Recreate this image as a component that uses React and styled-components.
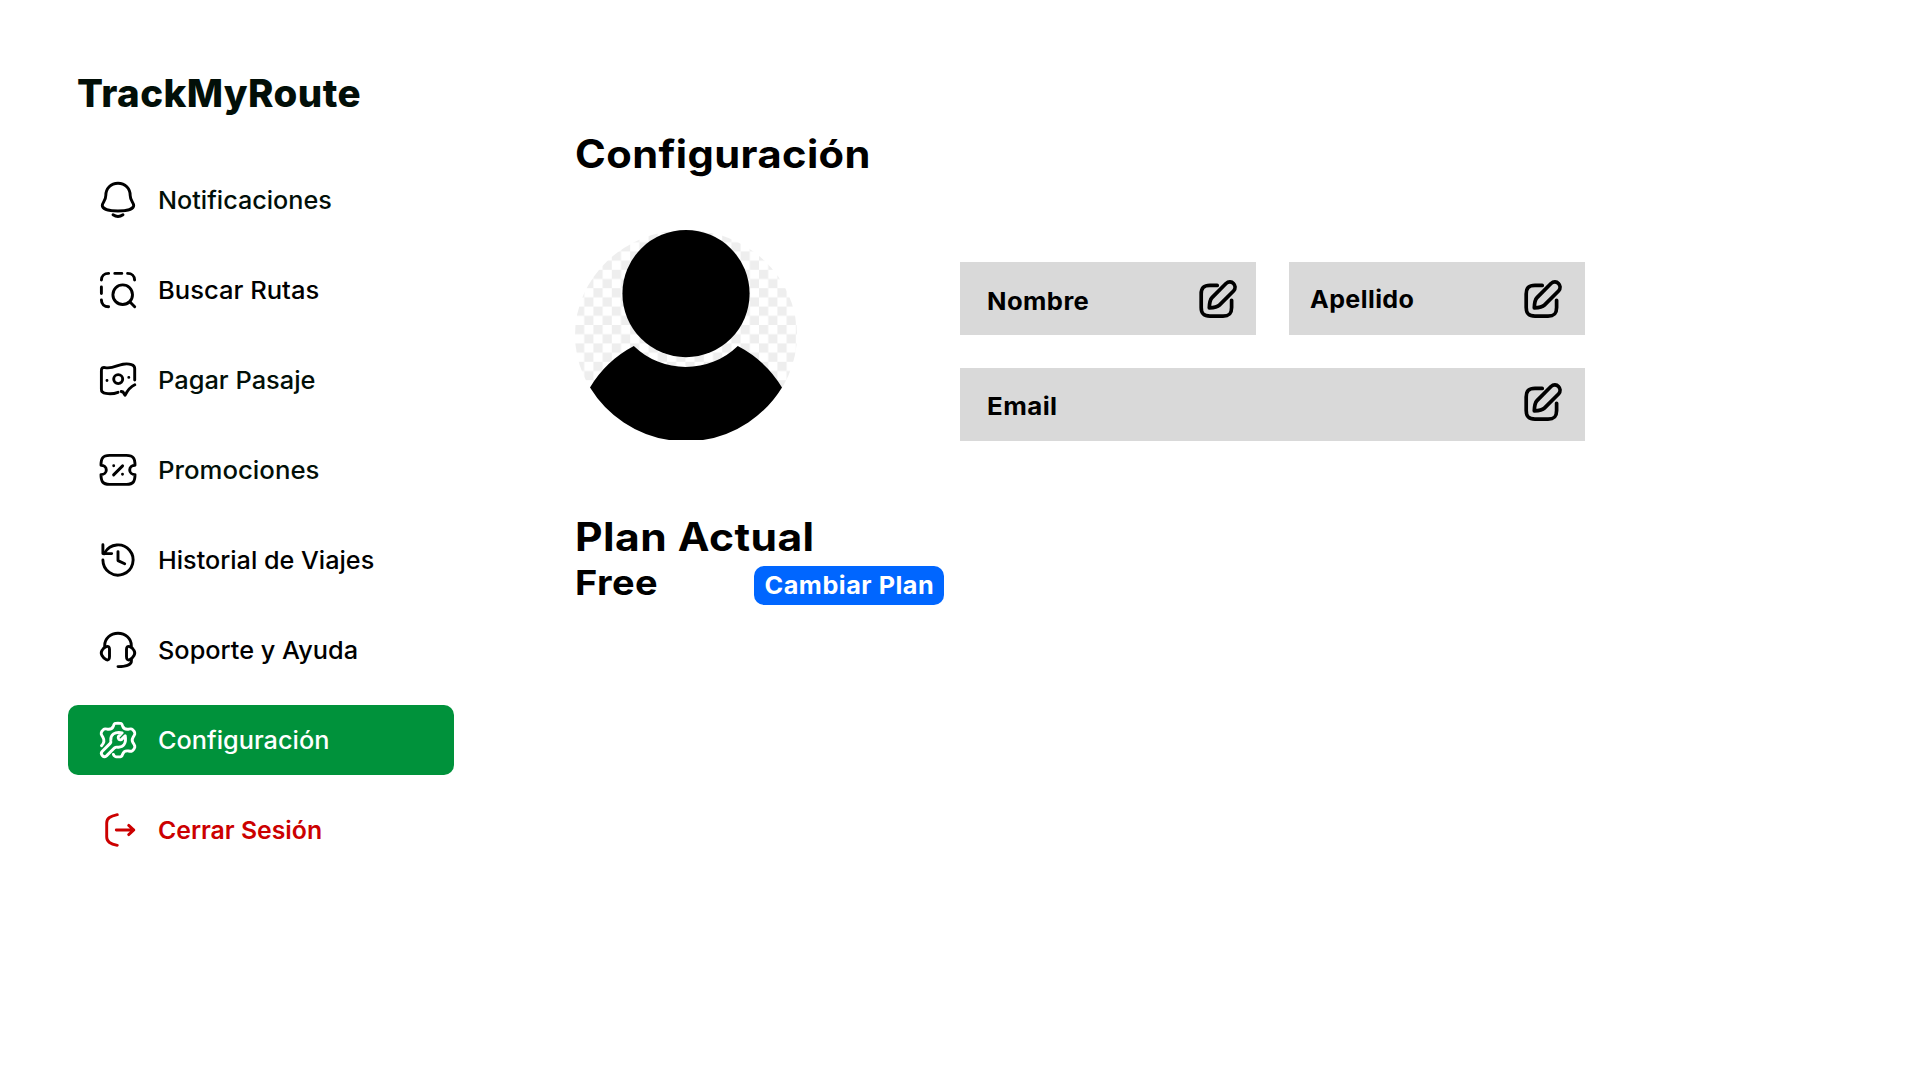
import React from "react";
import styled, { createGlobalStyle } from "styled-components";

const GlobalStyle = createGlobalStyle`
  * { box-sizing: border-box; }
  body {
    margin: 0;
    background: #fff;
    color: #000;
    font-family: Inter, "Liberation Sans", sans-serif;
  }
  h1, h2, p { margin: 0; }
`;

const Page = styled.div`
  display: flex;
  width: 1920px;
  height: 1080px;
  overflow: hidden;
`;

const Sidebar = styled.aside`
  width: 454px;
  padding: 69px 0 0 68px;
`;

const Logo = styled.div`
  height: 96px;
  padding-left: 9px;
  font-size: 38.5px;
  line-height: 48px;
  font-weight: 800;
  letter-spacing: 0.4px;
  color: #020f08;
  white-space: nowrap;
`;

const Nav = styled.nav`
  display: flex;
  flex-direction: column;
  gap: 20px;
`;

const NavItem = styled.a`
  display: flex;
  align-items: center;
  gap: 20px;
  height: 70px;
  padding-left: 30px;
  border-radius: 10px;
  background: ${(p) => (p.$active ? "#00923b" : "transparent")};
  color: ${(p) => p.$color || "#020f08"};
  text-decoration: none;
`;

const NavLabel = styled.span`
  margin-top: 2px;
  font-size: 24.2px;
  line-height: 30px;
  font-weight: ${(p) => p.$weight || 450};
  white-space: nowrap;
  transform: scaleX(${(p) => p.$stretch});
  transform-origin: left;
`;

const Icon = styled.svg`
  flex: none;
  width: 40px;
  height: 40px;
  overflow: visible;
  fill: none;
  stroke: ${(p) => p.$stroke || "#000"};
  stroke-width: ${(p) => p.$width || 2.9};
  stroke-linecap: round;
  stroke-linejoin: round;
`;

const Main = styled.main`
  width: 1009px;
  margin-left: 122px;
  padding-top: 130px;
`;

const Title = styled.h1`
  margin-left: -1px;
  font-size: 39px;
  line-height: 48px;
  font-weight: 700;
  letter-spacing: 0.4px;
  white-space: nowrap;
  transform: scaleX(${(p) => p.$stretch});
  transform-origin: left;
`;

const Profile = styled.section`
  display: flex;
  gap: 163px;
  margin-top: 52px;
`;

const Avatar = styled.svg`
  flex: none;
  width: 222px;
  height: 210px;
  margin-left: -1px;
`;

const Fields = styled.div`
  display: grid;
  grid-template-columns: 296px 296px;
  grid-auto-rows: 73px;
  gap: 33px;
  margin-top: 32px;
`;

const Field = styled.div`
  display: flex;
  justify-content: space-between;
  align-items: flex-start;
  grid-column: ${(p) => (p.$wide ? "1 / -1" : "auto")};
  padding: ${(p) => p.$pad};
  background: #d9d9d9;
`;

const FieldLabel = styled.span`
  margin-top: ${(p) => p.$top}px;
  font-size: 24.2px;
  line-height: 30px;
  font-weight: 700;
  letter-spacing: 0.4px;
  transform: scaleX(${(p) => p.$stretch});
  transform-origin: left;
`;

const Plan = styled.section`
  margin-top: 72px;
`;

const PlanRow = styled.div`
  display: flex;
  justify-content: space-between;
  width: 368px;
  height: 44px;
`;

const PlanName = styled.p`
  margin: 1px 0 0 -1px;
  font-size: 34.5px;
  line-height: 42px;
  font-weight: 700;
  letter-spacing: 0.4px;
  transform: scaleX(1.1);
  transform-origin: left;
`;

const PlanButton = styled.button`
  width: 190px;
  height: 39px;
  margin-top: 5px;
  padding: 0;
  border: 0;
  border-radius: 10px;
  background: #0066ff;
  color: #fff;
  font-family: inherit;
  font-size: 24.2px;
  line-height: 39px;
  font-weight: 700;
  letter-spacing: 0.5px;
  white-space: nowrap;
`;

const PlanButtonLabel = styled.span`
  display: inline-block;
  transform: scaleX(1.043);
`;

const BellIcon = () => (
  <Icon viewBox="0 0 40 40">
    <path d="M20 3.3C12.8 3.3 7.8 8.6 7.8 15.5C7.8 20.5 4.3 22.3 4.3 25.6C4.3 29 11 31 20 31S35.7 29 35.7 25.6C35.7 22.3 32.2 20.5 32.2 15.5C32.2 8.6 27.2 3.3 20 3.3Z" />
    <path d="M15 34.8Q20 38.2 25 34.8" />
  </Icon>
);

const SearchIcon = () => (
  <Icon viewBox="0 0 40 40">
    <path d="M10.6 3.4C6.2 3.4 3.4 6 3.4 10M16.8 3.4H23.8M29.6 3.4C33.8 3.4 36.6 6 36.6 10M3.4 17V23.6M3.4 30C3.4 34 6.2 36.7 10.6 36.7" />
    <circle cx="24.7" cy="24.7" r="9.8" />
    <path d="M32 32L36.7 36.7" />
  </Icon>
);

const MoneyIcon = () => (
  <Icon viewBox="0 0 40 40">
    <path d="M20 32.3C16 33.8 12 34 8 33.4C5 33 3.4 32.3 3.4 29.5V10.5C3.4 8 4.5 7.3 7 7.6C14 9.2 19 5.2 25 4.2C28 3.7 31 3.8 33.5 4.6C36 5.3 36.7 6.4 36.7 8.6V20" />
    <circle cx="20.2" cy="19.1" r="4.5" />
    <path d="M9 20.5V20.5M30.8 17.4V17.4" />
    <path d="M23.2 31.5L25 32L27 35.3C29.5 30.5 33 26.5 36.8 24.8" />
  </Icon>
);

const TicketIcon = () => (
  <Icon viewBox="0 0 40 40">
    <path d="M3 15.3C3 8.5 4.5 5.4 11.5 5.4H28.5C35.5 5.4 37 8.5 37 15.3C33.9 15.3 31.7 17.3 31.7 19.9S33.9 24.6 37 24.6C37 31.3 35.5 34.4 28.5 34.4H11.5C4.5 34.4 3 31.3 3 24.6C6.1 24.6 8.3 22.5 8.3 19.9S6.1 15.3 3 15.3Z" />
    <path d="M15.6 24.9L24.6 15.9M15.7 15.7V15.7M24.5 24.3V24.3" />
  </Icon>
);

const HistoryIcon = () => (
  <Icon viewBox="0 0 40 40">
    <path d="M4.9 20A15.1 15.1 0 1 0 6.9 12.5L6 13.8" />
    <path d="M4.9 4.8V13.6H13.7" />
    <path d="M20 11.6V20.6L26.7 23.7" />
  </Icon>
);

const HeadsetIcon = () => (
  <Icon viewBox="0 0 40 40">
    <path d="M6.7 16.5V15.5C6.7 8.5 12.5 3.3 20 3.3S33.3 8.5 33.3 15.5V16.5" />
    <path d="M4 20.5C5 18.3 6.4 17.3 8.3 16.6C10.5 16 11.5 17 11.5 19.2V26.8C11.5 29.5 10.3 30.4 8.3 29.7C6.6 29 5.2 27.6 4 25.5C2.8 23.5 2.8 22.5 4 20.5Z" />
    <path d="M36 20.5C35 18.3 33.6 17.3 31.7 16.6C29.5 16 28.5 17 28.5 19.2V26.8C28.5 29.5 29.7 30.4 31.7 29.7C33.4 29 34.8 27.6 36 25.5C37.2 23.5 37.2 22.5 36 20.5Z" />
    <path d="M33.4 29.5V31C33.4 35.2 28 36.6 20 36.6" />
  </Icon>
);

const SettingsIcon = () => (
  <Icon viewBox="0 0 40 40" $stroke="#fff">
    <path d="M3.5 25.8C6.5 22.6 6.6 20.2 5 17.5C3.2 14.6 2.4 13.4 4 11.2C5.6 8.7 6.4 8.6 9.4 9.2C12.5 9.7 14.5 8.6 15.4 6C16.2 3.3 16.7 3.2 20 3.2S23.8 3.3 24.6 6C25.5 8.6 27.5 9.7 30.6 9.2C33.6 8.6 34.4 8.7 36 11.2C37.6 13.4 36.8 14.6 35 17.5C33.8 19.4 33.8 20.8 35 22.7C36.8 25.6 37.6 26.8 36 29C34.4 31.5 33.6 31.6 30.6 31C27.5 30.5 25.5 31.6 24.6 34.2C23.8 36.7 23.3 36.9 20 36.9C17 36.9 16.3 36.6 15.4 34.4" />
    <path d="M4.1 31.5L12.2 23.4C13 22.5 13 21.5 12.8 20.2C12.4 14.8 16.5 11.3 24.2 12.8L20.4 16.6C19.5 18.8 21.2 20.5 23.4 19.6L27.2 15.8C28.7 23.5 25.2 27.6 19.8 27.2C18.5 27 17.5 27 16.6 27.8L8.5 35.9C5.7 38.2 1.8 34.3 4.1 31.5Z" />
  </Icon>
);

const LogoutIcon = () => (
  <Icon viewBox="0 0 40 40" $stroke="#cc0000">
    <path d="M19.3 4.7C12.5 6.2 8.7 8 8.7 13V27C8.7 32 12.5 33.8 19.3 35.3" />
    <path d="M18.3 20H35.8M30.7 15.4L35.8 20L30.7 24.6" />
  </Icon>
);

const EditIcon = () => (
  <Icon viewBox="0 0 40 40" $width={3.7}>
    <path d="M19.2 6.4H12C5.6 6.4 3.2 8.6 3.2 15V28.5C3.2 34.9 5.6 37.1 12 37.1H25C31.4 37.1 33.6 34.9 33.6 28.5V21.3" />
    <path d="M28 4.5L14 18.6C11.8 20.8 11.5 23 11.3 28.8C17 28.6 19.2 28.3 21.4 26.1L35.5 12C40.2 6.8 33.2-.3 28 4.5Z" />
  </Icon>
);

const ProfilePicture = () => (
  <Avatar viewBox="0 0 222 210">
    <defs>
      <pattern id="checks" width="18.4" height="18.4" y="3" patternUnits="userSpaceOnUse">
        <path fill="#eee" d="M0 0H9.2V9.2H0ZM9.2 9.2H18.4V18.4H9.2Z" />
      </pattern>
    </defs>
    <ellipse cx="111" cy="105" rx="111" ry="105" fill="url(#checks)" />
    <circle cx="111" cy="63.6" r="63.6" />
    <path d="M58.8 116A75 75 0 0 0 162.8 116A112.5 112.5 0 0 1 207 157.4A113 113 0 0 1 128 210H94A113 113 0 0 1 15 157.4A112.5 112.5 0 0 1 58.8 116Z" />
  </Avatar>
);

const items = [
  { label: "Notificaciones", icon: BellIcon, stretch: 1.041 },
  { label: "Buscar Rutas", icon: SearchIcon, stretch: 1.057, color: "#000" },
  { label: "Pagar Pasaje", icon: MoneyIcon, stretch: 1.051 },
  { label: "Promociones", icon: TicketIcon, stretch: 1.065 },
  { label: "Historial de Viajes", icon: HistoryIcon, stretch: 1.041, color: "#000" },
  { label: "Soporte y Ayuda", icon: HeadsetIcon, stretch: 1.046, color: "#000" },
  { label: "Configuración", icon: SettingsIcon, stretch: 1.045, color: "#fff", active: true },
  { label: "Cerrar Sesión", icon: LogoutIcon, stretch: 1.025, color: "#cc0000", weight: 600 },
];

export default function App() {
  return (
    <>
      <GlobalStyle />
      <Page>
        <Sidebar>
          <Logo>TrackMyRoute</Logo>
          <Nav>
            {items.map(({ label, icon: Glyph, stretch, color, weight, active }) => (
              <NavItem key={label} $active={active} $color={color}>
                <Glyph />
                <NavLabel $stretch={stretch} $weight={weight}>{label}</NavLabel>
              </NavItem>
            ))}
          </Nav>
        </Sidebar>
        <Main>
          <Title $stretch={1.067}>Configuración</Title>
          <Profile>
            <ProfilePicture />
            <Fields>
              <Field $pad="17px 18px 0 27px">
                <FieldLabel $top={8} $stretch={1.058}>Nombre</FieldLabel>
                <EditIcon />
              </Field>
              <Field $pad="17px 22px 0 21px">
                <FieldLabel $top={6} $stretch={1.037}>Apellido</FieldLabel>
                <EditIcon />
              </Field>
              <Field $wide $pad="14px 22px 0 27px">
                <FieldLabel $top={10} $stretch={1.07}>Email</FieldLabel>
                <EditIcon />
              </Field>
            </Fields>
          </Profile>
          <Plan>
            <Title as="h2" $stretch={1.092}>Plan Actual</Title>
            <PlanRow>
              <PlanName>Free</PlanName>
              <PlanButton>
                <PlanButtonLabel>Cambiar Plan</PlanButtonLabel>
              </PlanButton>
            </PlanRow>
          </Plan>
        </Main>
      </Page>
    </>
  );
}
